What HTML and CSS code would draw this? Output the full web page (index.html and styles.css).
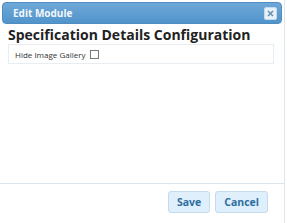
FILE: index.html
```html
<!DOCTYPE html>
<html lang="en">
<head>
    <meta charset="UTF-8">
    <title>Edit Module</title>
    <link rel="stylesheet" href="styles.css">
</head>
<body>
    <div class="dialog">
        <div class="dialog-titlebar">
            <span class="dialog-title">Edit Module</span>
            <span class="dialog-close">
                <svg width="7" height="7" viewBox="0 0 7 7"><path d="M1 1L6 6M6 1L1 6" stroke="#6d8fae" stroke-width="1.6"/></svg>
            </span>
        </div>
        <div class="dialog-content">
            <h2>Specification Details Configuration</h2>
            <div class="field-box">
                <label>Hide Image Gallery</label>
                <span class="check"></span>
            </div>
        </div>
        <div class="dialog-buttons">
            <button>Save</button>
            <button>Cancel</button>
        </div>
    </div>
</body>
</html>
```

FILE: styles.css
```css
body {
    margin: 0;
    padding: 0;
    background-color: #fff;
    font-family: 'Open Sans', 'DejaVu Sans', sans-serif;
}
.dialog {
    width: 285px;
    height: 223px;
    display: flex;
    flex-direction: column;
    padding: 2px 2px 0 2px;
    box-sizing: border-box;
    border-right: 1px solid #dbe6f0;
}
.dialog-titlebar {
    height: 20px;
    background: linear-gradient(#6ea8d8, #5194cb);
    border: 1px solid #4f8dc2;
    border-radius: 4px;
    display: flex;
    align-items: center;
    justify-content: space-between;
    padding: 0 4px 0 10px;
}
.dialog-title {
    color: #f4f8fc;
    font-weight: bold;
    font-size: 10px;
}
.dialog-close {
    width: 13px;
    height: 13px;
    background: #e6f1fa;
    border: 1px solid #c5dbec;
    border-radius: 2px;
    display: flex;
    align-items: center;
    justify-content: center;
    box-sizing: border-box;
}
.dialog-content {
    flex: 1;
    padding: 0 8px 0 6px;
}
h2 {
    margin: 2px 0 0 0;
    font-size: 14px;
    color: #222;
    line-height: 18px;
}
.field-box {
    border: 1px solid #e8edf1;
    padding: 3px 6px;
    font-size: 8px;
    color: #333;
    height: 12px;
    display: flex;
    align-items: center;
    gap: 5px;
}
.check {
    width: 7px;
    height: 7px;
    border: 1px solid #777;
    background: #fff;
}
.dialog-buttons {
    border-top: 1px solid #dde5ec;
    height: 40px;
    margin: 0 -2px;
    display: flex;
    justify-content: flex-end;
    align-items: flex-start;
    gap: 5px;
    padding: 7px 16px 0 0;
    box-sizing: border-box;
}
button {
    background: #dfeffc;
    border: 1px solid #c5dbec;
    border-radius: 3px;
    color: #2e6e9e;
    font-family: 'Open Sans', sans-serif;
    font-weight: bold;
    font-size: 10.5px;
    height: 22px;
    padding: 0 8px;
}
```
